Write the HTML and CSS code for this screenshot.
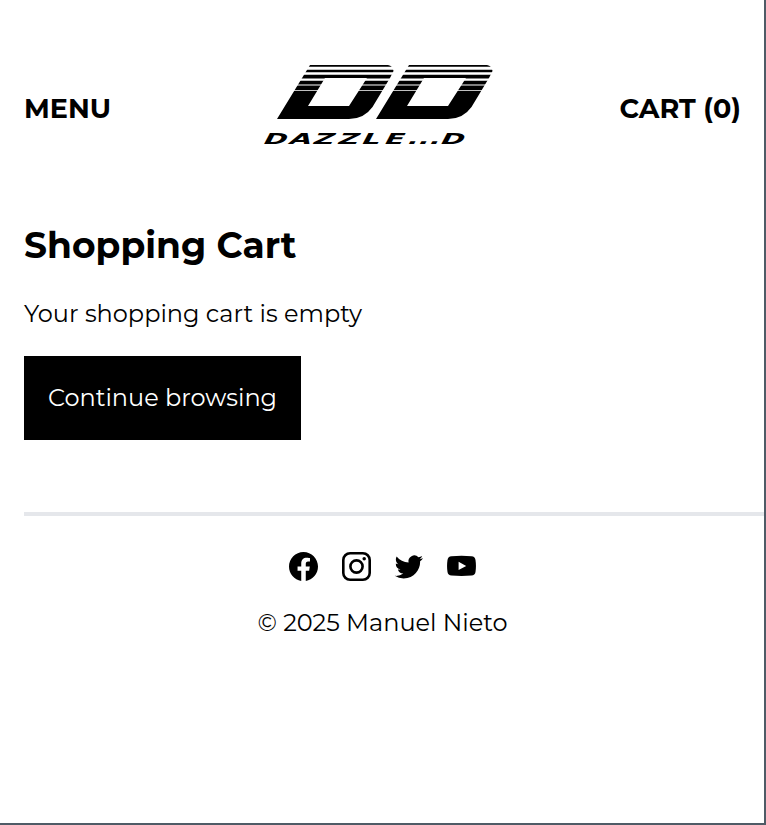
FILE: index.html
```html
<!DOCTYPE html>
<html lang="en">
<head>
<meta charset="utf-8">
<title>Shopping Cart</title>
<link rel="stylesheet" href="styles.css">
</head>
<body>
<header class="header">
  <a class="nav">MENU</a>
  <svg class="logo" width="252" height="100" viewBox="252 55 252 100" role="img">
    <defs>
      <path id="mark" fill-rule="evenodd" d="M310 65H388Q393 66 393.500 71L390 78L372.500 107Q364 119 349 119H277ZM325 78L308 106H349L367 78Z"/>
    </defs>
    <use href="#mark"/>
    <use href="#mark" x="99"/>
    <path class="stripes" d="M262 66.700H494V69.700H262ZM262 72.200H494V74.800H262ZM262 78.500H494V80.800H262ZM262 84.400H494V85.600H262ZM262 90.200H494V91H262Z"/>
    <text class="wordmark" transform="translate(264 144) skewX(-28) scale(1.9 1)" x="-1.3 12.400 25 38 50.500 62.500 74.700 80.500 86.300 92" y="0">DAZZLE...D</text>
  </svg>
  <a class="nav nav-end">CART (0)</a>
</header>
<main class="cart">
  <h1>Shopping Cart</h1>
  <p>Your shopping cart is empty</p>
  <a class="button">Continue browsing</a>
</main>
<footer class="footer">
  <div class="social">
    <svg width="29" height="29" viewBox="0 0 24 24"><path d="M24 12.073C24 5.446 18.627 0 12 0S0 5.446 0 12.073c0 6.026 4.388 11.020 10.125 11.927v-8.437H7.078v-3.490h3.047V9.430c0-3.022 1.792-4.691 4.533-4.691 1.312 0 2.686.236 2.686.236v2.971H15.830c-1.491 0-1.956.930-1.956 1.886v2.241h3.328l-.532 3.490h-2.796V24C19.612 23.093 24 18.099 24 12.073Z"/></svg>
    <svg width="29" height="29" viewBox="0 0 29 29"><rect class="line" x="1.300" y="1.300" width="26.400" height="26.400" rx="6.800"/><circle class="line" cx="14.500" cy="14.500" r="6.100"/><circle cx="22.200" cy="6.800" r="1.750"/></svg>
    <svg width="29" height="29" viewBox="-.6 -.7 24.600 24.600"><path d="M23.953 4.570a10 10 0 0 1-2.825.775 4.958 4.958 0 0 0 2.163-2.723 9.900 9.900 0 0 1-3.127 1.184 4.920 4.920 0 0 0-8.384 4.482C7.690 8.095 4.067 6.130 1.640 3.162a4.822 4.822 0 0 0-.666 2.475c0 1.710.870 3.213 2.188 4.096a4.904 4.904 0 0 1-2.228-.616v.060a4.923 4.923 0 0 0 3.946 4.827 4.996 4.996 0 0 1-2.212.085 4.936 4.936 0 0 0 4.604 3.417 9.867 9.867 0 0 1-6.102 2.105c-.390 0-.779-.023-1.170-.067a13.995 13.995 0 0 0 7.557 2.209c9.053 0 13.998-7.496 13.998-13.985 0-.210 0-.420-.015-.630A9.935 9.935 0 0 0 24 4.590Z"/></svg>
    <svg width="29" height="29" viewBox="0 0 29 29"><path fill-rule="evenodd" d="M4.500 4.200Q14.500 3.400 24.500 4.200Q28 4.500 28.500 8Q29.400 14 28.500 20Q28 23.300 24.500 23.600Q14.500 24.400 4.500 23.600Q1 23.300.500 20Q-.400 14 .500 8Q1 4.500 4.500 4.200ZM11.600 9.700V18.100L19.200 13.900Z"/></svg>
  </div>
  <p>© 2025 Manuel Nieto</p>
</footer>
</body>
</html>
```
FILE: styles.css
```css
* { box-sizing: border-box; }
body {
  margin: 0;
  height: 825px;
  overflow: hidden;
  border-right: 2px solid #4f5b66;
  border-bottom: 2px solid #4f5b66;
  background: #fff;
  color: #000;
  font: 400 24px/36px Montserrat, Inter, sans-serif;
}
svg { display: block; }
.header {
  display: grid;
  grid-template-columns: 228px 1fr 122px;
  align-items: center;
  height: 100px;
  margin: 55px 23px 0 24px;
}
.logo { overflow: visible; }
.nav { font-size: 27px; font-weight: 700; padding-top: 7px; white-space: nowrap; }
.nav-end { justify-self: end; }
.wordmark { font: 700 15px "DejaVu Sans", sans-serif; }
.stripes { fill: #fff; }
.cart { padding: 66px 24px 0; }
h1 { margin: 0; font-size: 36px; line-height: 48px; font-weight: 700; }
p { margin: 0; }
.cart p { margin: 27px 0 24px; }
.button {
  display: flex;
  align-items: center;
  justify-content: center;
  width: 277px;
  height: 84px;
  background: #000;
  color: #fff;
}
.footer {
  margin: 72px 0 0 24px;
  border-top: 4px solid #e5e7eb;
  padding: 36px 23px 0 0;
  text-align: center;
}
.social { display: flex; justify-content: center; gap: 23.600px; height: 53px; }
.line { fill: none; stroke: #000; stroke-width: 2.600px; }
```
